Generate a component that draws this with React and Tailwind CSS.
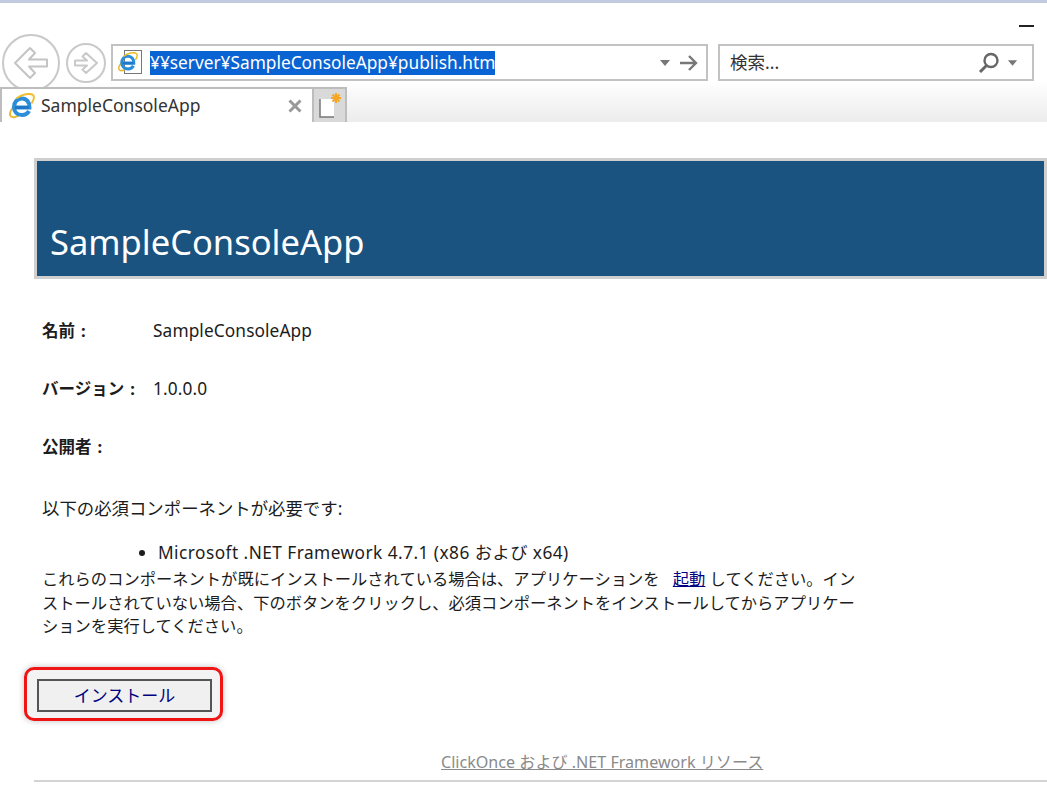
import React from "react";

const font = { fontFamily: '"Noto Sans", "Noto Sans CJK JP", sans-serif' };

function IeLogo({ size = 26 }) {
  return (
    <svg width={size} height={size} viewBox="0 0 26 26" fill="none">
      <path d="M6.500 11.500c-2 2-4 4.500-5 7-1.500 4 .5 6.500 4.500 5.500 2-.5 4-1.500 6-3" stroke="#eab92e" strokeWidth="2" strokeLinecap="round" />
      <path d="M6 14.500h14.500c.4-5-2.900-9-7.500-9-4.700 0-8 3.700-8 8.500 0 4.700 3.200 8 8 8 3.200 0 5.600-1.400 7-4" stroke="#2a8edb" strokeWidth="4" />
      <path d="M6 14.500h14" stroke="#1f78c8" strokeWidth="3" />
      <path d="M8 5c5.500-3.700 12.500-5 15.500-3.300 2.300 1.300 1.500 4.800-.5 8" stroke="#f0bd2c" strokeWidth="2" strokeLinecap="round" />
    </svg>
  );
}

function Row({ label, value }) {
  return (
    <div className="flex h-[58px] items-center leading-none text-[#1c1c1c]">
      <span className="w-[111px] text-[16.500px] font-bold">{label}<span className="ml-[6px]">:</span></span>
      <span className="text-[17.300px] tracking-[0.1px]">{value}</span>
    </div>
  );
}

export default function App() {
  return (
    <div className="h-[808px] w-[1047px] overflow-hidden bg-white" style={font}>
      <div className="h-[3px] bg-[#c3cbe0]" />
      <div className="flex h-[41px] justify-end pr-[13px] pt-[22px]">
        <div className="h-[1.500px] w-[15px] bg-[#222]" />
      </div>

      {/* toolbar */}
      <div className="flex h-[37px] items-center pl-[2px]">
        <div className="z-10 flex h-[58px] w-[58px] shrink-0 items-center justify-center rounded-full border-2 border-[#c9c9c9] bg-white">
          <svg width="36" height="34" viewBox="0 0 36 34" fill="none" stroke="#c4c4c4" strokeWidth="2" strokeLinejoin="round">
            <path d="M2 17 17 2l5 5-6 6.500h18v7H16l6 6.500-5 5z" />
          </svg>
        </div>
        <div className="ml-[6px] flex h-[40px] w-[40px] shrink-0 items-center justify-center rounded-full border-2 border-[#c9c9c9]">
          <svg width="26" height="24" viewBox="0 0 26 24" fill="none" stroke="#c9c9c9" strokeWidth="2" strokeLinejoin="round">
            <path d="M24 12 13 2 9.500 5.500 14 9.500H2v5h12l-4.500 4L13 22z" />
          </svg>
        </div>
        <div className="ml-[5px] flex h-[37px] w-[597px] items-center border-2 border-[#c2c2c2] pl-[5px] pr-[8px]">
          <div className="relative h-[25px] w-[24px] shrink-0">
            <div className="absolute right-0 top-0 h-[24px] w-[18px] border border-[#777] bg-white" />
            <div className="absolute left-0 top-[2px]"><IeLogo size={20} /></div>
          </div>
          <span className="ml-[8px] bg-[#0a63d2] text-[17.300px] leading-[24px] text-white">¥¥server¥SampleConsoleApp¥publish.htm</span>
          <svg className="ml-auto -translate-x-[2px]" width="12" height="6" viewBox="0 0 12 6"><path d="M1 0h10L6 6z" fill="#777" /></svg>
          <svg className="ml-[7px]" width="18" height="16" viewBox="0 0 18 16" fill="none" stroke="#777" strokeWidth="2.400"><path d="M0 8h16M9 1l7 7-7 7" /></svg>
        </div>
        <div className="ml-[10px] flex h-[37px] w-[316px] items-center border-2 border-[#c2c2c2] pl-[10px] pr-[14px] text-[17.500px] leading-none text-[#333]">
          <span>検索...</span>
          <svg className="ml-auto" width="22" height="24" viewBox="0 0 22 24" fill="none" stroke="#666"><circle cx="13" cy="9.500" r="6.500" strokeWidth="2.400" /><path d="M8.500 14.500 2 21" strokeWidth="3" /></svg>
          <svg className="ml-[7px]" width="11" height="6" viewBox="0 0 12 6"><path d="M1 0h10L6 6z" fill="#777" /></svg>
        </div>
      </div>

      {/* tabs */}
      <div className="flex h-[41px] items-end bg-gradient-to-b from-white to-[#ececec]">
        <div className="z-20 flex h-[35px] w-[312px] items-center border-l-2 border-t-2 border-[#bdbdbd] bg-white pl-[7px] pr-[10px]">
          <IeLogo size={26} />
          <span className="ml-[6px] text-[17.500px] leading-none text-[#333]">SampleConsoleApp</span>
          <svg className="ml-auto" width="14" height="14" viewBox="0 0 14 14" stroke="#999" strokeWidth="3"><path d="m1.500 1.500 11 11m0-11-11 11" /></svg>
        </div>
        <div className="flex h-[35px] w-[35px] items-center justify-center border-x-2 border-t-2 border-[#bdbdbd] bg-[#d9d9d9]">
          <svg width="26" height="28" viewBox="0 0 26 28">
            <path d="M3 7h13l1 2v16H3z" fill="#fff" />
            <path d="M3 7v18h14" fill="none" stroke="#777" strokeWidth="1.500" />
            <path d="M19 1v10M14 6h10M15.500 2.500l7 7m0-7-7 7" stroke="#f5a623" strokeWidth="2" />
          </svg>
        </div>
      </div>

      {/* page */}
      <div className="ml-[34px] mt-[36px] flex h-[121px] items-end border-[3px] border-[#cfcfcf] bg-[#1b5380] pb-[10px] pl-[13px]">
        <h1 className="text-[34.500px] leading-[48px] text-white">SampleConsoleApp</h1>
      </div>

      <div className="ml-[42px] mt-[23px]">
        <Row label="名前" value="SampleConsoleApp" />
        <Row label="バージョン" value="1.0.0.0" />
        <Row label="公開者" value="" />
        <p className="mt-[20px] text-[17.400px] leading-[24px] text-[#1c1c1c]">以下の必須コンポーネントが必要です:</p>
        <ul className="ml-[116px] mt-[21px] list-outside list-disc text-[17.300px] leading-[24px] tracking-[0.45px] text-[#1c1c1c]">
          <li>Microsoft .NET Framework 4.7.1 (x86 および x64)</li>
        </ul>
        <p className="mt-[3px] w-[830px] text-[16.300px] leading-[23.500px] text-[#1c1c1c]">
          これらのコンポーネントが既にインストールされている場合は、アプリケーションを <a className="ml-[9px] text-[#000080] underline">起動</a> してください。イン<br />
          ストールされていない場合、下のボタンをクリックし、必須コンポーネントをインストールしてからアプリケー<br />
          ションを実行してください。
        </p>
      </div>

      <div className="ml-[24px] mt-[28px] flex h-[54px] w-[199px] items-center justify-center rounded-[10px] border-[3px] border-[#f01414] bg-[#f3f3f3] shadow-[0_0_6px_rgba(0,0,0,0.25)]">
        <button className="ml-[2px] mt-[3px] h-[33px] w-[175px] border-2 border-[#555] bg-[#f0f0f0] text-[17px] leading-none text-[#000080]">インストール</button>
      </div>

      <div className="ml-[34px] mt-[28px] flex h-[33px] border-b-2 border-[#d4d4d4] pl-[407px] pt-[1px]">
        <a className="text-[16.100px] leading-[24px] text-[#8a8a8a] underline">ClickOnce および .NET Framework リソース</a>
      </div>
    </div>
  );
}
